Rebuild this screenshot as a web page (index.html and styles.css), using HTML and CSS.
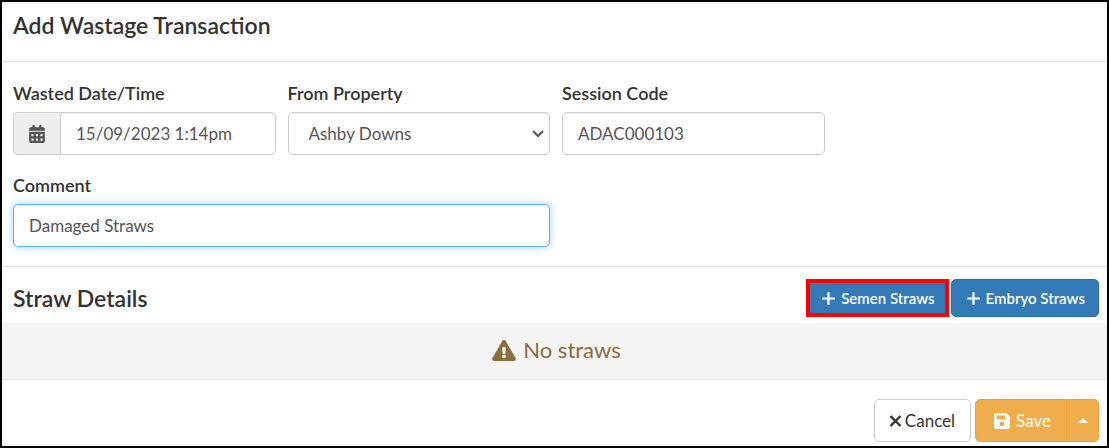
FILE: index.html
```html
<!DOCTYPE html>
<html lang="en">
<head>
    <meta charset="UTF-8">
    <meta name="viewport" content="width=device-width, initial-scale=1.0">
    <title>Add Wastage Transaction</title>
    <link rel="stylesheet" href="styles.css">
</head>
<body>
    <form class="modal">
        <div class="modal-header">
            <h1 class="title">Add Wastage Transaction</h1>
        </div>

        <div class="fields">
            <div class="form-group">
                <label for="wasted">Wasted Date/Time</label>
                <div class="input-group">
                    <span class="addon">
                        <svg width="16" height="18" viewBox="0 0 448 512" fill="currentColor"><path d="M0 464c0 26.500 21.500 48 48 48h352c26.500 0 48-21.500 48-48V192H0v272zm320-196c0-6.600 5.400-12 12-12h40c6.600 0 12 5.400 12 12v40c0 6.600-5.400 12-12 12h-40c-6.600 0-12-5.400-12-12v-40zm0 128c0-6.600 5.400-12 12-12h40c6.600 0 12 5.400 12 12v40c0 6.600-5.400 12-12 12h-40c-6.600 0-12-5.400-12-12v-40zM192 268c0-6.600 5.400-12 12-12h40c6.600 0 12 5.400 12 12v40c0 6.600-5.400 12-12 12h-40c-6.600 0-12-5.400-12-12v-40zm0 128c0-6.600 5.400-12 12-12h40c6.600 0 12 5.400 12 12v40c0 6.600-5.400 12-12 12h-40c-6.600 0-12-5.400-12-12v-40zM64 268c0-6.600 5.400-12 12-12h40c6.600 0 12 5.400 12 12v40c0 6.600-5.400 12-12 12H76c-6.600 0-12-5.400-12-12v-40zm0 128c0-6.600 5.400-12 12-12h40c6.600 0 12 5.400 12 12v40c0 6.600-5.400 12-12 12H76c-6.600 0-12-5.400-12-12v-40zM400 64h-48V16c0-8.800-7.200-16-16-16h-32c-8.800 0-16 7.200-16 16v48H160V16c0-8.800-7.200-16-16-16h-32c-8.800 0-16 7.200-16 16v48H48C21.500 64 0 85.500 0 112v48h448v-48c0-26.500-21.500-48-48-48z"/></svg>
                    </span>
                    <input type="text" id="wasted" class="form-control" value="15/09/2023 1:14pm">
                </div>
            </div>
            <div class="form-group">
                <label for="property">From Property</label>
                <div class="select-wrap">
                    <select id="property" class="form-control">
                        <option>Ashby Downs</option>
                    </select>
                    <svg class="chevron" width="12" height="8" viewBox="0 0 12 8" fill="none" stroke="currentColor" stroke-width="2"><path d="M1 1l5 5 5-5"/></svg>
                </div>
            </div>
            <div class="form-group">
                <label for="session">Session Code</label>
                <input type="text" id="session" class="form-control" value="ADAC000103">
            </div>
            <div class="form-group wide">
                <label for="comment">Comment</label>
                <input type="text" id="comment" class="form-control active" value="Damaged Straws">
            </div>
        </div>

        <div class="straw-header">
            <h2 class="title">Straw Details</h2>
            <div class="straw-buttons">
                <button type="button" class="btn btn-primary highlight">
                    <svg width="13" height="13" viewBox="0 0 13 13" stroke="currentColor" stroke-width="2.200" stroke-linecap="round"><path d="M6.500 1v11M1 6.500h11"/></svg>
                    Semen Straws
                </button>
                <button type="button" class="btn btn-primary">
                    <svg width="13" height="13" viewBox="0 0 13 13" stroke="currentColor" stroke-width="2.200" stroke-linecap="round"><path d="M6.500 1v11M1 6.500h11"/></svg>
                    Embryo Straws
                </button>
            </div>
        </div>

        <div class="no-straws">
            <svg width="24" height="21" viewBox="0 0 576 512" fill="currentColor"><path d="M569.500 440C588 472 564.800 512 527.900 512H48.100c-36.900 0-60-40.100-41.600-72L246.400 24c18.500-32 64.700-32 83.200 0l239.900 416zM288 354c-25.400 0-46 20.600-46 46s20.600 46 46 46 46-20.600 46-46-20.600-46-46-46zm-43.700-165.300l7.400 136c.4 6.400 5.600 11.300 12 11.300h48.500c6.400 0 11.600-5 12-11.300l7.400-136c.4-6.900-5.100-12.700-12-12.700h-63.400c-6.900 0-12.400 5.800-12 12.700z"/></svg>
            No straws
        </div>

        <div class="modal-footer">
            <button type="button" class="btn btn-default">
                <svg width="13" height="14" viewBox="0 0 13 14" stroke="currentColor" stroke-width="2.400"><path d="M1.500 2l10 10M11.500 2l-10 10"/></svg>
                Cancel
            </button>
            <div class="btn-group">
                <button type="submit" class="btn btn-warning">
                    <svg width="16" height="16" viewBox="0 0 16 16" fill="currentColor" fill-rule="evenodd"><path d="M2 0h10l4 4v10a2 2 0 0 1-2 2H2a2 2 0 0 1-2-2V2a2 2 0 0 1 2-2zM2.500 2.500v4h9v-4zM8 8.500a2.400 2.400 0 1 0 0 4.800 2.400 2.400 0 0 0 0-4.800z"/></svg>
                    Save
                </button>
                <button type="button" class="btn btn-warning toggle" aria-label="More save options">
                    <svg width="10" height="5" viewBox="0 0 10 5" fill="currentColor"><path d="M0 5l5-5 5 5z"/></svg>
                </button>
            </div>
        </div>
    </form>
</body>
</html>
```

FILE: styles.css
```css
* {
    box-sizing: border-box;
}
body {
    margin: 0;
    background-color: #fff;
    color: #333;
    font-family: Lato, sans-serif;
    font-size: 18px;
    line-height: 26px;
}
.modal {
    border: 2px solid #000;
    min-height: 100vh;
}
.modal-header {
    padding: 10px 11px 23px;
    border-bottom: 1px solid #e5e5e5;
}
.title {
    margin: 0;
    font-size: 23px;
    font-weight: 600;
    line-height: 26px;
}
.fields {
    display: grid;
    grid-template-columns: repeat(4, 1fr);
    gap: 17px 12px;
    padding: 18px 8px 19px 11px;
    border-bottom: 1px solid #ddd;
}
.wide {
    grid-column: 1 / 3;
}
.form-group label {
    display: block;
    margin-bottom: 6px;
    font-weight: 600;
}
.form-control {
    display: block;
    width: 100%;
    height: 43px;
    padding: 6px 15px;
    border: 1px solid #ccc;
    border-radius: 5px;
    background-color: #fff;
    box-shadow: inset 0 1px 1px rgba(0,0,0,0.075);
    color: #555;
    font-family: inherit;
    font-size: 17px;
    outline: none;
}
.form-control.active {
    border-color: #66afe9;
    box-shadow: inset 0 1px 1px rgba(0,0,0,0.075), 0 0 8px rgba(102,175,233,0.6);
}
.input-group {
    display: flex;
}
.input-group .form-control {
    flex: 1;
    min-width: 0;
    border-radius: 0 5px 5px 0;
}
.addon {
    display: flex;
    align-items: center;
    justify-content: center;
    width: 47px;
    border: 1px solid #ccc;
    border-right: 0;
    border-radius: 5px 0 0 5px;
    background-color: #eee;
    color: #555;
}
.select-wrap {
    position: relative;
}
select.form-control {
    appearance: none;
    padding: 6px 20px;
}
.chevron {
    position: absolute;
    right: 6px;
    top: 18px;
    color: #555;
    pointer-events: none;
}
.straw-header {
    display: flex;
    align-items: center;
    justify-content: space-between;
    padding: 12px 8px 6px 11px;
}
.straw-buttons {
    display: flex;
    gap: 2px;
}
.btn {
    display: flex;
    align-items: center;
    justify-content: center;
    height: 43px;
    border: 1px solid #ccc;
    border-radius: 5px;
    background-color: #fff;
    color: #333;
    font-family: inherit;
    font-size: 17px;
    cursor: pointer;
}
.btn-primary {
    gap: 6px;
    height: 38px;
    padding: 0 13px 0 15px;
    border-color: #2e6da4;
    background-color: #337ab7;
    color: #fff;
    font-size: 15px;
    font-weight: 600;
}
.btn-primary.highlight {
    padding: 0 10px 0 12px;
    border: 4px solid #f00;
    border-radius: 0;
}
.no-straws {
    display: flex;
    align-items: center;
    justify-content: center;
    gap: 7px;
    height: 57px;
    padding: 0 0 2px 4px;
    border-bottom: 1px solid #e5e5e5;
    background-color: #f4f4f4;
    color: #8a6d3b;
    font-size: 22px;
}
.modal-footer {
    display: flex;
    justify-content: flex-end;
    gap: 4px;
    padding: 19px 8px 3px;
}
.btn-default {
    gap: 3px;
    padding: 0 15px 0 14px;
}
.btn-group {
    display: flex;
}
.btn-warning {
    gap: 6px;
    padding: 0 15px 0 18px;
    border-color: #eea236;
    border-radius: 5px 0 0 5px;
    background-color: #f0ad4e;
    color: #fff;
}
.btn-warning.toggle {
    width: 32px;
    padding: 0;
    border-left: 0;
    border-radius: 0 5px 5px 0;
}
```
